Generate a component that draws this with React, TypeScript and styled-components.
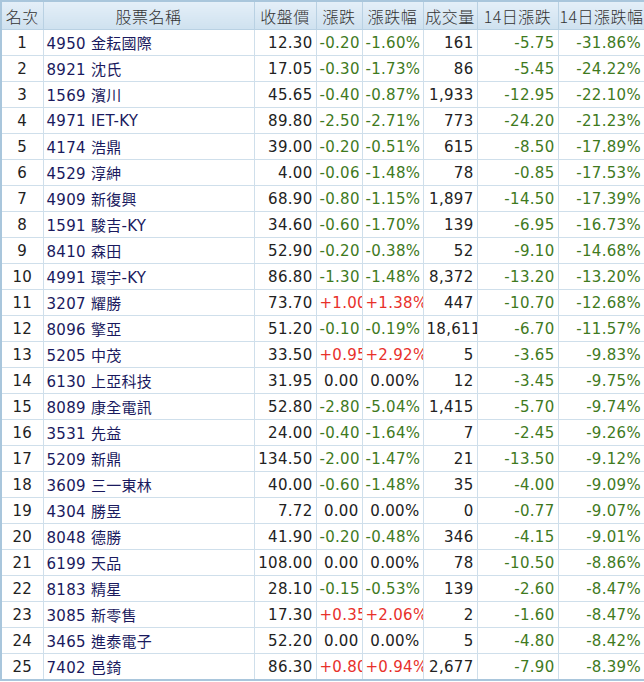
import React from "react";
import styled, { createGlobalStyle } from "styled-components";

const G = createGlobalStyle`
  body { margin: 0; background: #fff; font-family: "Liberation Sans", "Noto Sans CJK TC", sans-serif; }
`;

const Table = styled.table`
  width: 644px;
  border-collapse: collapse;
  border: 2px solid #a9c6dc;
  table-layout: fixed;
  font-size: 16px;
`;
const Th = styled.th`
  height: 27px;
  padding: 0 1px;
  background: linear-gradient(#e4eff8, #cfe1ef);
  color: #333;
  font-weight: normal;
  border: 1px solid #b9d1e3;
  white-space: nowrap;
  letter-spacing: 0.5px;
  font-family: "Noto Sans CJK TC", sans-serif;
  font-size: 16px;
  font-weight: 300;
`;
const Td = styled.td<{ $align?: string; $color?: string }>`
  height: 25px;
  padding: 0 3px;
  border: 1px solid #cfdfeb;
  text-align: ${(p) => p.$align || "right"};
  color: ${(p) => p.$color || "#222"};
  white-space: nowrap;
  letter-spacing: 0.3px;
  font-family: "DejaVu Sans", "Noto Sans CJK TC", sans-serif;
  font-size: 15px;
  overflow: hidden;
`;

const rows: [string, string, string, string, string, string, string, string][] = [
  ["4950", "金耘國際", "12.30", "-0.20", "-1.60", "161", "-5.75", "-31.86"],
  ["8921", "沈氏", "17.05", "-0.30", "-1.73", "86", "-5.45", "-24.22"],
  ["1569", "濱川", "45.65", "-0.40", "-0.87", "1,933", "-12.95", "-22.10"],
  ["4971", "IET-KY", "89.80", "-2.50", "-2.71", "773", "-24.20", "-21.23"],
  ["4174", "浩鼎", "39.00", "-0.20", "-0.51", "615", "-8.50", "-17.89"],
  ["4529", "淳紳", "4.00", "-0.06", "-1.48", "78", "-0.85", "-17.53"],
  ["4909", "新復興", "68.90", "-0.80", "-1.15", "1,897", "-14.50", "-17.39"],
  ["1591", "駿吉-KY", "34.60", "-0.60", "-1.70", "139", "-6.95", "-16.73"],
  ["8410", "森田", "52.90", "-0.20", "-0.38", "52", "-9.10", "-14.68"],
  ["4991", "環宇-KY", "86.80", "-1.30", "-1.48", "8,372", "-13.20", "-13.20"],
  ["3207", "耀勝", "73.70", "+1.00", "+1.38", "447", "-10.70", "-12.68"],
  ["8096", "擎亞", "51.20", "-0.10", "-0.19", "18,611", "-6.70", "-11.57"],
  ["5205", "中茂", "33.50", "+0.95", "+2.92", "5", "-3.65", "-9.83"],
  ["6130", "上亞科技", "31.95", "0.00", "0.00", "12", "-3.45", "-9.75"],
  ["8089", "康全電訊", "52.80", "-2.80", "-5.04", "1,415", "-5.70", "-9.74"],
  ["3531", "先益", "24.00", "-0.40", "-1.64", "7", "-2.45", "-9.26"],
  ["5209", "新鼎", "134.50", "-2.00", "-1.47", "21", "-13.50", "-9.12"],
  ["3609", "三一東林", "40.00", "-0.60", "-1.48", "35", "-4.00", "-9.09"],
  ["4304", "勝昱", "7.72", "0.00", "0.00", "0", "-0.77", "-9.07"],
  ["8048", "德勝", "41.90", "-0.20", "-0.48", "346", "-4.15", "-9.01"],
  ["6199", "天品", "108.00", "0.00", "0.00", "78", "-10.50", "-8.86"],
  ["8183", "精星", "28.10", "-0.15", "-0.53", "139", "-2.60", "-8.47"],
  ["3085", "新零售", "17.30", "+0.35", "+2.06", "2", "-1.60", "-8.47"],
  ["3465", "進泰電子", "52.20", "0.00", "0.00", "5", "-4.80", "-8.42"],
  ["7402", "邑錡", "86.30", "+0.80", "+0.94", "2,677", "-7.90", "-8.39"],
];

const col = (v: string) =>
  v.startsWith("+") ? "#e8302a" : v.startsWith("-") ? "#3f7a1e" : "#222";

export default function App() {
  const widths = [42, 211, 62, 46, 61, 54, 81, 87];
  return (
    <>
      <G />
      <Table>
        <colgroup>
          {widths.map((w, i) => (
            <col key={i} style={{ width: w }} />
          ))}
        </colgroup>
        <thead>
          <tr>
            {["名次", "股票名稱", "收盤價", "漲跌", "漲跌幅", "成交量", "14日漲跌", "14日漲跌幅"].map((h) => (
              <Th key={h}>{h}</Th>
            ))}
          </tr>
        </thead>
        <tbody>
          {rows.map((r, i) => (
            <tr key={i}>
              <Td $align="center">{i + 1}</Td>
              <Td $align="left" $color="#1a1a5e">{r[0]} {r[1]}</Td>
              <Td>{r[2]}</Td>
              <Td $color={col(r[3])}>{r[3]}</Td>
              <Td $color={col(r[4])}>{r[4]}%</Td>
              <Td>{r[5]}</Td>
              <Td $color={col(r[6])}>{r[6]}</Td>
              <Td $color={col(r[7])}>{r[7]}%</Td>
            </tr>
          ))}
        </tbody>
      </Table>
    </>
  );
}
